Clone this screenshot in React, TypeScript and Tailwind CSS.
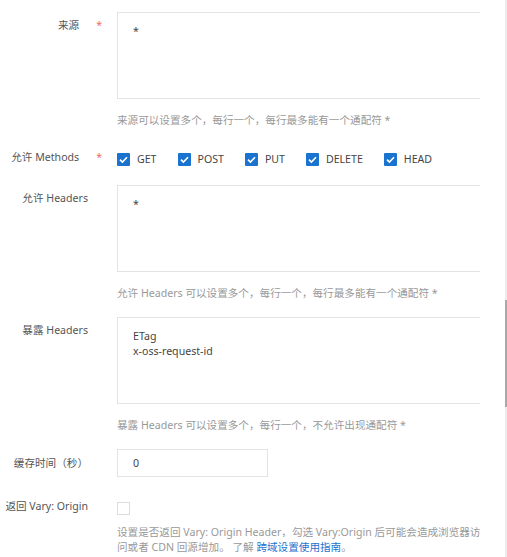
import React from "react";

const methods = ["GET", "POST", "PUT", "DELETE", "HEAD"];

function Label({text, required}: {text: string; required?: boolean}) {
    return (
        <div className="w-[117px] shrink-0 flex justify-end items-start pr-[29px] text-[#555] leading-[17px] whitespace-nowrap">
            <span>{text}</span>
            {required && <span className="ml-[17px] -mr-[14px] text-[#f06a6a]">*</span>}
        </div>
    );
}

function CheckBox({checked}: {checked?: boolean}) {
    if (!checked) {
        return <span className="block w-[13px] h-[13px] border border-[#dcdcdc] bg-white"/>;
    }
    return (
        <svg width="13" height="13" viewBox="0 0 13 13" className="block shrink-0">
            <rect x="0" y="0" width="13" height="13" rx="1" fill="#1b73d0"/>
            <path d="M3 6.6 L5.4 9 L10 4.2" stroke="#fff" strokeWidth="1.6" fill="none"/>
        </svg>
    );
}

function Area({value}: {value: string}) {
    return (
        <textarea
            readOnly
            defaultValue={value}
            className="block shrink-0 w-[400px] h-[87px] resize-none overflow-hidden border border-[#e3e3e3] bg-white pt-[11px] px-[15px] text-[#444] leading-[15px] outline-none"
        />
    );
}

function Help({children}: {children: React.ReactNode}) {
    return <div className="mt-[13px] pl-[117px] text-[#999] leading-[17px] whitespace-nowrap">{children}</div>;
}

export default function App() {
    return (
        <div className="flex w-[507px] h-[557px] bg-white overflow-hidden text-[10.6px]"
             style={{fontFamily: '"Noto Sans", "Noto Sans CJK SC", sans-serif'}}>
            <div className="w-[480px] shrink-0 overflow-hidden">
                <div className="flex mt-[12px]">
                    <div className="pt-[5px]"><Label text="来源" required/></div>
                    <Area value="*"/>
                </div>
                <Help>来源可以设置多个，每行一个，每行最多能有一个通配符 *</Help>

                <div className="flex mt-[20px]">
                    <Label text="允许 Methods" required/>
                    <div className="flex items-center pt-[4px] text-[#444] leading-[13px]">
                        {methods.map((m) => (
                            <label key={m} className="flex items-center mr-[21px]">
                                <CheckBox checked/>
                                <span className="ml-[7px]">{m}</span>
                            </label>
                        ))}
                    </div>
                </div>

                <div className="flex mt-[19px]">
                    <div className="pt-[5px]"><Label text="允许 Headers"/></div>
                    <Area value="*"/>
                </div>
                <Help>允许 Headers 可以设置多个，每行一个，每行最多能有一个通配符 *</Help>

                <div className="flex mt-[15px]">
                    <div className="pt-[5px]"><Label text="暴露 Headers"/></div>
                    <Area value={"ETag\nx-oss-request-id"}/>
                </div>
                <Help>暴露 Headers 可以设置多个，每行一个，不允许出现通配符 *</Help>

                <div className="flex items-center mt-[15px]">
                    <Label text="缓存时间（秒）"/>
                    <input
                        readOnly
                        defaultValue="0"
                        className="block w-[151px] h-[28px] border border-[#e3e3e3] px-[15px] text-[#444] outline-none"
                    />
                </div>

                <div className="flex mt-[21px]">
                    <Label text="返回 Vary: Origin"/>
                    <div className="pt-[4px]"><CheckBox/></div>
                </div>
                <div className="mt-[10px] pl-[117px] text-[#999] leading-[15px] whitespace-nowrap">
                    <div>设置是否返回 Vary: Origin Header，勾选 Vary:Origin 后可能会造成浏览器访</div>
                    <div>
                        问或者 CDN 回源增加。 了解 <a className="text-[#1b73d0]">跨域设置使用指南</a>。
                    </div>
                </div>
            </div>
            <div className="flex-1"/>
            <div className="w-[2px] shrink-0 bg-[#ededed]">
                <div className="mt-[300px] h-[107px] bg-[#a9a9a9]"/>
            </div>
        </div>
    );
}
